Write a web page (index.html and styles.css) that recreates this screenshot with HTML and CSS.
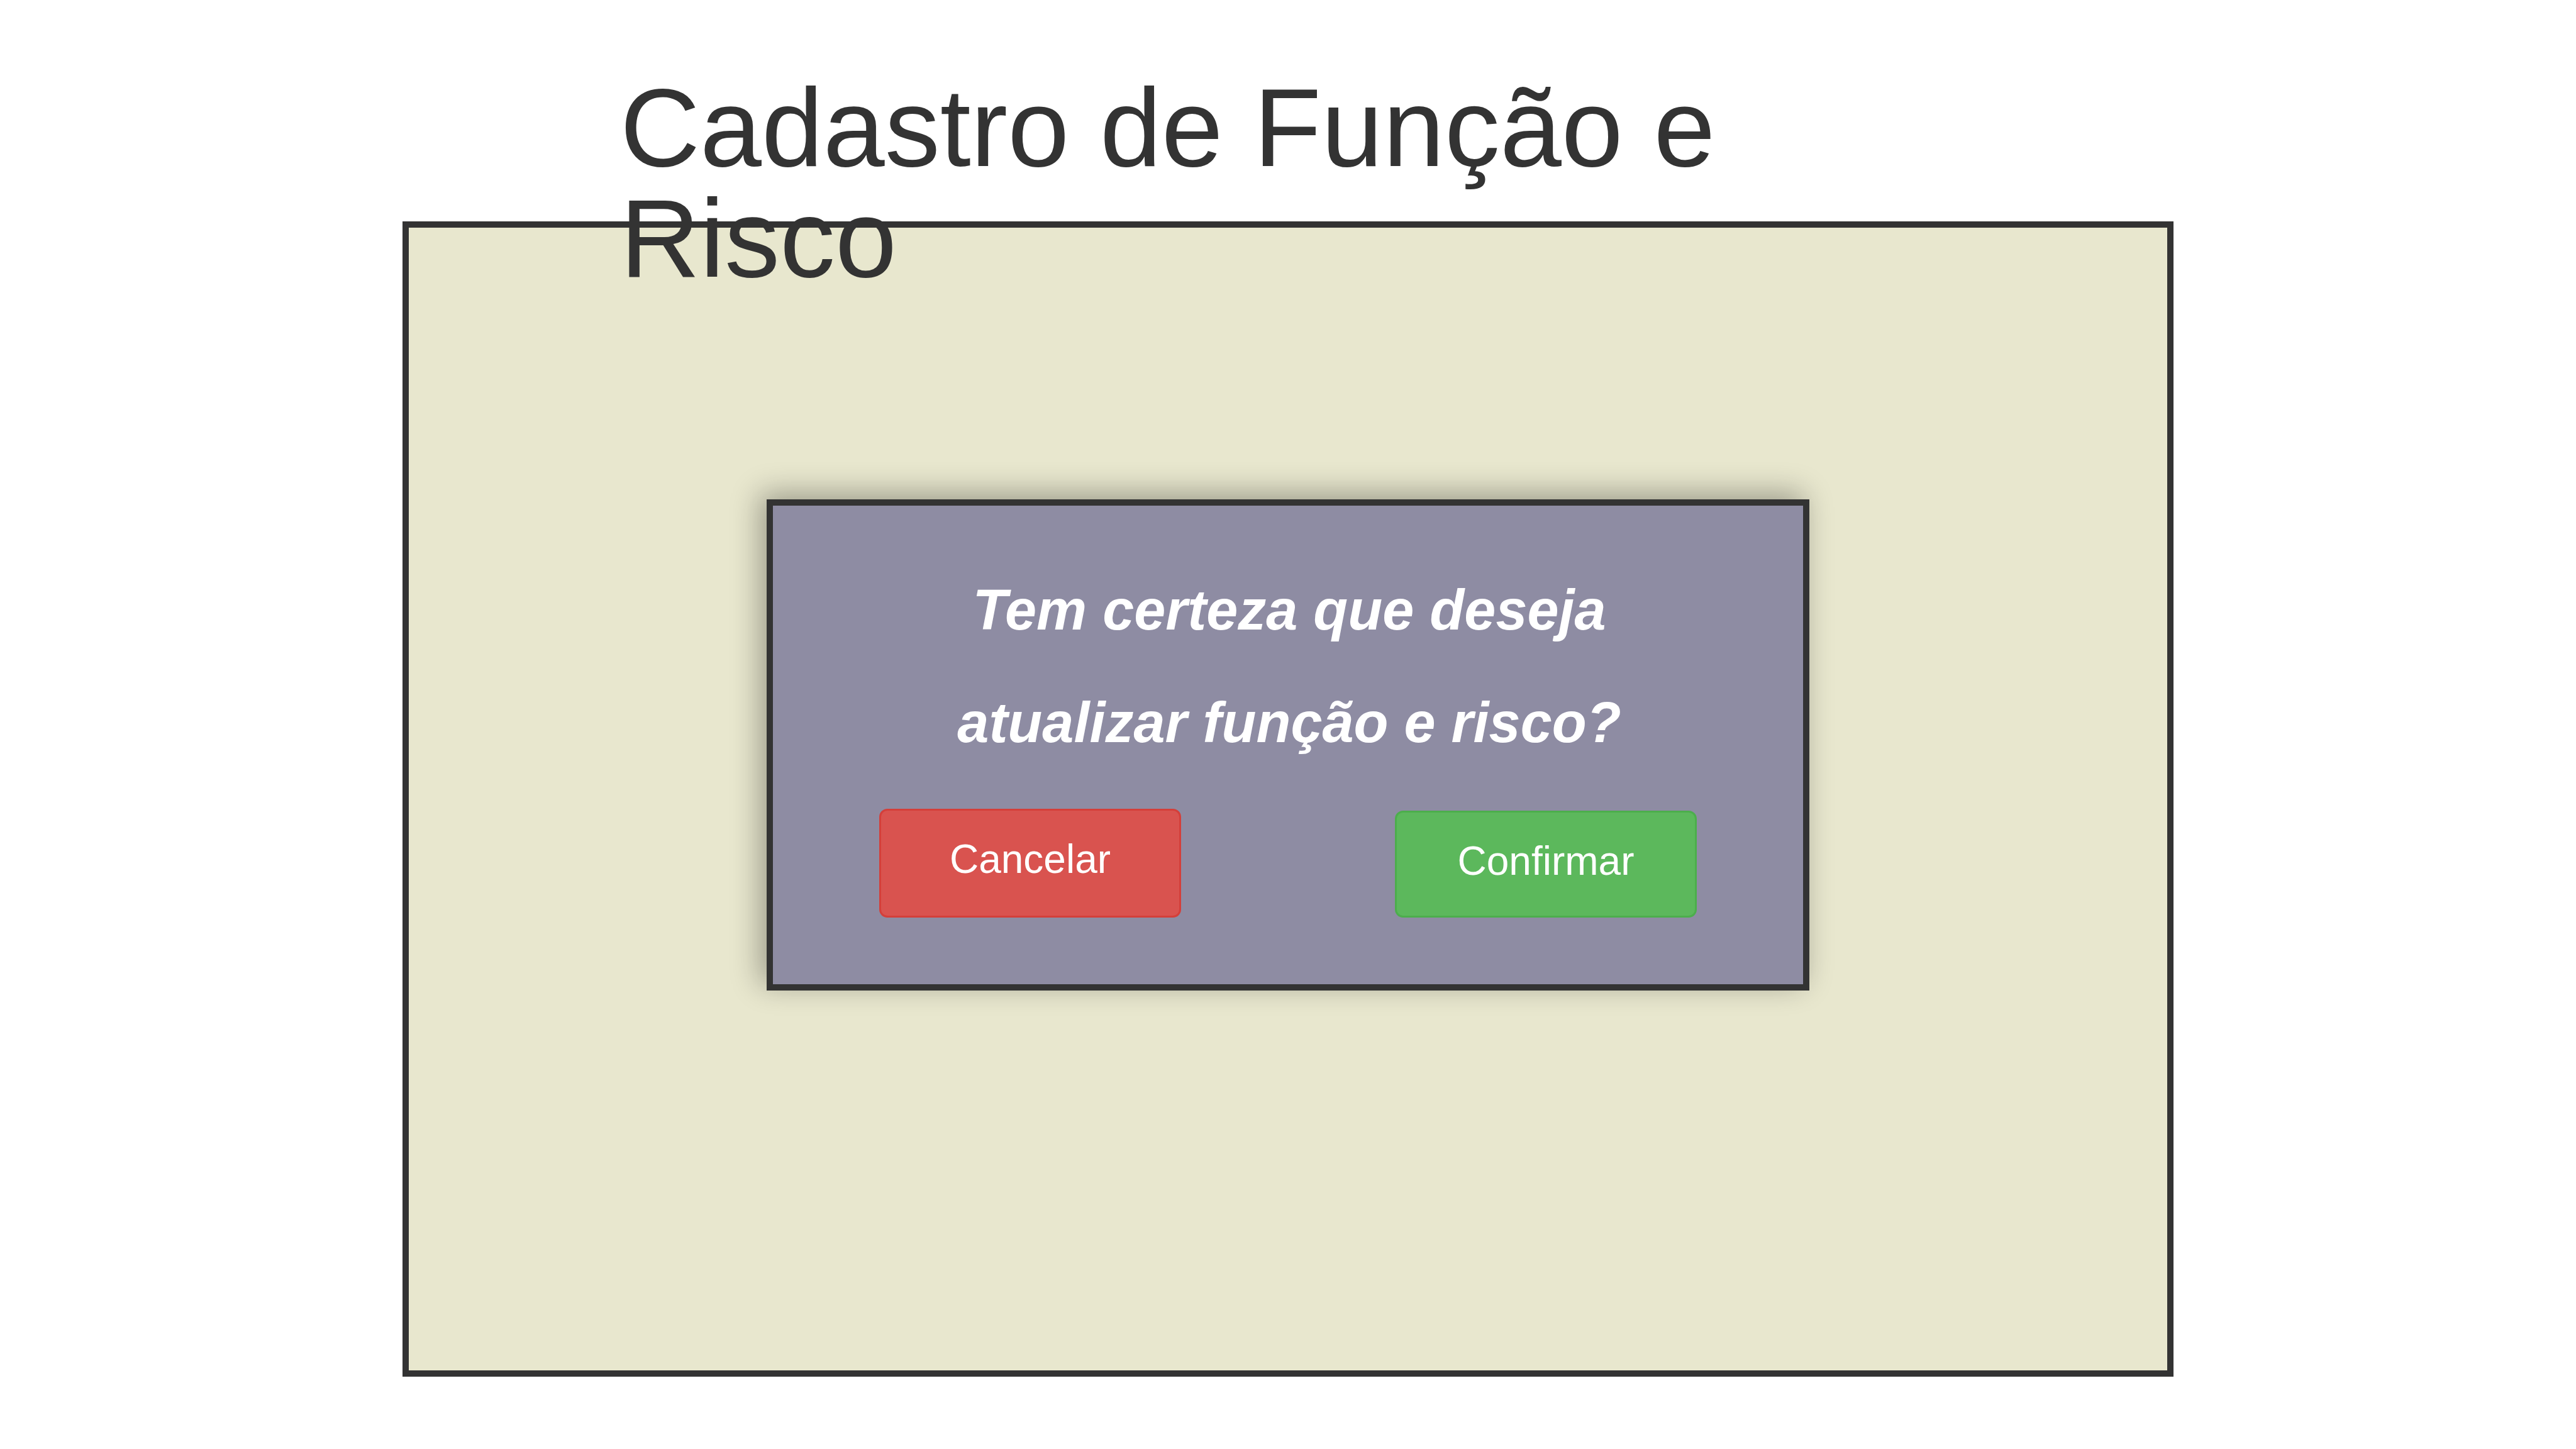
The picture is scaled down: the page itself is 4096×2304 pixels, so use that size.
FILE: index.html
```
<!DOCTYPE html>
<html lang="pt-BR">
<head>
  <meta charset="utf-8">
  <meta name="viewport" content="width=device-width, initial-scale=1">
  <title>Cadastro de Função e Risco</title>
  <link rel="stylesheet" href="styles.css">
</head>
<body class="page">
  <header class="page-header">
    <h1 class="page-title">Cadastro de Função e Risco</h1>
  </header>
  <main class="panel">
    <section class="dialog" role="dialog" aria-labelledby="dialog-question">
      <h2 class="dialog-question" id="dialog-question">Tem certeza que deseja atualizar função e risco?</h2>
      <div class="dialog-actions">
        <button type="button" class="btn btn-danger">Cancelar</button>
        <button type="button" class="btn btn-success">Confirmar</button>
      </div>
    </section>
  </main>
</body>
</html>
```
FILE: styles.css
```
* {
  box-sizing: border-box;
}

.page {
  margin: 0;
  background: #fff;
  color: #333;
  font-family: "Liberation Sans", Arial, sans-serif;
}

/* The title is allowed to run over the top edge of the panel. */
.page-header {
  position: relative;
  z-index: 1;
  margin: 0 24.07vw -115px;
  padding-top: 115px;
}

.page-title {
  margin: 0;
  font-size: 176px;
  font-weight: 400;
  line-height: 176px;
}

.panel {
  width: 68.75%;
  margin: 0 auto;
  padding: 432px 0 604px;
  border: 10px solid #333;
  background: #e8e7ce;
}

.dialog {
  width: 59.3%;
  margin: 0 auto;
  padding: 77px 169px 106px;
  border: 10px solid #333;
  background: #8e8ca3;
  box-shadow: -10px -10px 44px rgba(0, 0, 0, 0.33);
}

.dialog-question {
  margin: 0 0 47px;
  padding-left: 4px;
  color: #fff;
  font-size: 90px;
  font-style: italic;
  font-weight: 700;
  line-height: 179px;
  text-align: center;
}

.dialog-actions {
  display: flex;
  align-items: flex-end;
  justify-content: space-between;
}

.btn {
  width: 480px;
  padding: 37px 0 47px;
  border: 3px solid;
  border-radius: 13px;
  color: #fff;
  font-family: inherit;
  font-size: 64px;
  line-height: 80px;
  text-align: center;
  cursor: pointer;
}

.btn-danger {
  padding-bottom: 50px;
  border-color: #d43f3a;
  background: #d9534f;
}

.btn-success {
  padding-bottom: 47px;
  border-color: #4cae4c;
  background: #5cb85c;
}
```
